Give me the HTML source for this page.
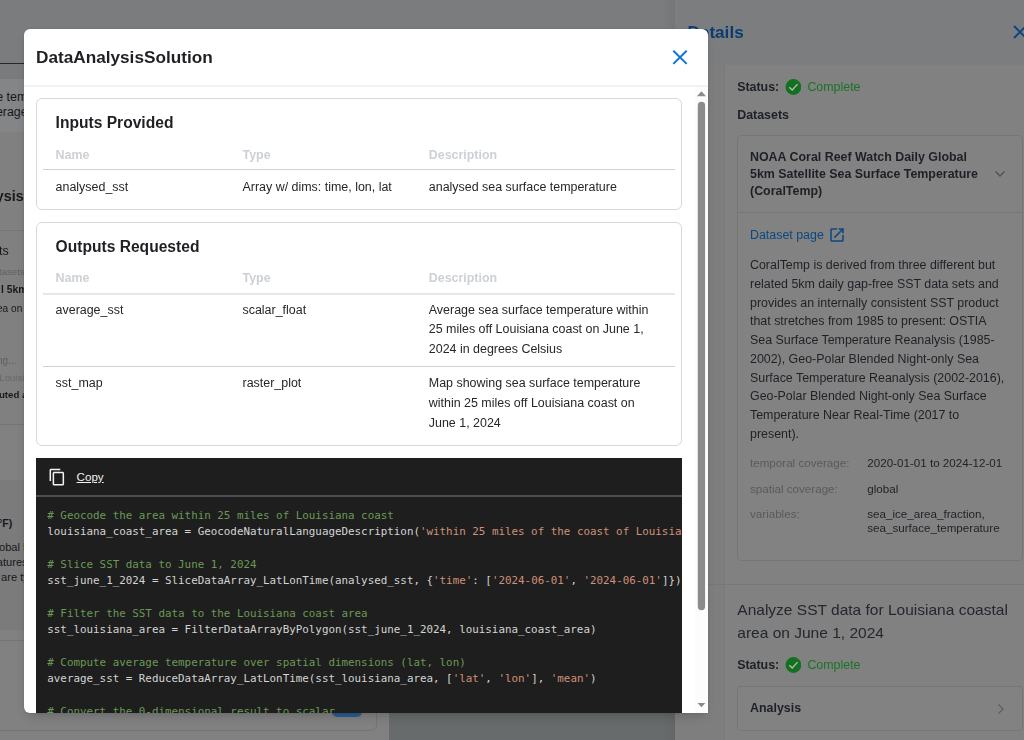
<!DOCTYPE html>
<html lang="en">
<head>
<meta charset="utf-8">
<title>DataAnalysisSolution</title>
<style>
*{box-sizing:border-box;margin:0;padding:0}
html,body{width:1024px;height:740px;overflow:hidden}
body{font-family:"Liberation Sans",Arial,sans-serif;font-size:12.42px;color:#1c1e21;background:#7b7c7e;position:relative}
.abs{position:absolute}
.t{position:absolute;white-space:pre;line-height:1}
.g{will-change:transform}

/* ---------- dimmed background page ---------- */
#bg{position:absolute;left:0;top:0;width:1024px;height:740px;overflow:hidden}
#bg .t{color:#17181b}
#dp .t{color:#1d2026}

/* ---------- modal ---------- */
#modal{will-change:transform;position:absolute;left:24px;top:29px;width:684px;height:684.3px;background:#fff;border-radius:6px 6px 0 6px;overflow:hidden;
  box-shadow:0 6px 12px -4px rgba(0,0,0,.2),0 0 3px rgba(0,0,0,.1)}
#mhead{position:absolute;left:0;top:0;width:684px;height:58px;border-bottom:2px solid #f1f2f4}
#mtitle{left:12px;top:19.9px;font-size:17.2px;font-weight:bold;color:#1e2023}
#mbody{position:absolute;left:0;top:58px;width:684px;height:627px;overflow:hidden}
.card{position:absolute;left:12px;width:646px;border:1px solid #d5d8dc;border-radius:6px;background:#fff}
.card h3{position:absolute;left:18.6px;font-size:15.6px;font-weight:bold;color:#1e2023;line-height:1;white-space:pre}
.th{color:#cdd1d6;font-weight:bold;font-size:12.42px}
.td{color:#25272a;font-size:12.45px}
.hl{position:absolute;left:6px;width:632px;height:1px;background:#cfd3d7}
#code{position:absolute;left:36px;top:458px;width:646px;height:255.3px;background:#1e1e1e;overflow:hidden}
#code pre{position:absolute;left:11.3px;top:49.8px;font-family:"DejaVu Sans Mono","Liberation Mono",monospace;font-size:10.87px;line-height:16.33px;color:#d4d4d4;white-space:pre}
.c{color:#6a9955}.s{color:#ce9178}.p{color:#9cdcfe}
</style>
</head>
<body>
<div id="bg">
  <!-- top nav -->
  <div class="abs" style="left:0;top:0;width:676px;height:64px;background:#7b7c7e"></div>
  <div class="abs" style="left:0;top:63px;width:60px;height:1px;background:#262728"></div>
  <!-- left panel -->
  <div class="abs" style="left:0;top:64px;width:388.5px;height:676px;background:#7a7b7d"></div>
  <div class="abs" style="left:0;top:79px;width:376px;height:52.6px;background:#848587"></div>
  <div class="t" style="left:-3.8px;top:91.1px;font-size:12.42px">e temperature</div>
  <div class="t" style="left:-4.1px;top:106.1px;font-size:12.42px">erage of</div>
  <div class="abs" style="left:0;top:131.6px;width:388.5px;height:609px;background:#808080"></div>
  <div class="t g" style="left:-80px;top:188.8px;font-size:14.29px;font-weight:bold;width:103.6px;text-align:right">Data Analysis</div>
  <div class="abs" style="left:0;top:230px;width:388.5px;height:1px;background:#767676"></div>
  <div class="t g" style="left:-1px;top:244.7px;font-size:12.42px">ts</div>
  <div class="t g" style="left:-0.7px;top:267.3px;font-size:9.6px;color:#5f6164">tasets</div>
  <div class="t g" style="left:0.9px;top:284.6px;font-size:10.3px;font-weight:bold">l 5km</div>
  <div class="t g" style="left:-3.3px;top:303.6px;font-size:10.1px">ea on</div>
  <div class="t g" style="left:-2.9px;top:355.8px;font-size:10px;color:#5c5e61">ng...</div>
  <div class="t g" style="left:-6.2px;top:373.3px;font-size:9.6px;color:#66686b">_Louisiana</div>
  <div class="t g" style="left:-1.5px;top:390.2px;font-size:9.6px;font-weight:bold">uted av</div>
  <div class="abs" style="left:0;top:424px;width:388.5px;height:1px;background:#747474"></div>
  <div class="abs" style="left:0;top:425px;width:388.5px;height:55px;background:#818181"></div>
  <div class="abs" style="left:0;top:480px;width:388.5px;height:150px;background:#7b7b7b"></div>
  <div class="t" style="left:-2px;top:517.6px;font-size:10.6px;font-weight:bold">°F)</div>
  <div class="t" style="left:-1px;top:542px;font-size:11.1px">obal 5km</div>
  <div class="t" style="left:-3.2px;top:557.3px;font-size:11.1px">atures</div>
  <div class="t" style="left:1.1px;top:572.2px;font-size:11.1px">are typ</div>
  <div class="abs" style="left:0;top:630px;width:388.5px;height:110px;background:#818181"></div>
  <div class="abs" style="left:-10px;top:640px;width:386.5px;height:91px;border:1px solid #747474;border-radius:6px"></div>
  <div class="abs" style="left:331.8px;top:690px;width:30.4px;height:27.3px;border-radius:5px;background:#2a5d8f"></div>
  <!-- map -->
  <div class="abs" style="left:388.5px;top:64.5px;width:287px;height:676px;background:#676b6c"></div>
  <!-- details panel -->
  <div class="abs" style="left:663px;top:0;width:12.3px;height:740px;background:linear-gradient(to right,rgba(0,0,0,0),rgba(0,0,0,.05))"></div>
  <div id="dp" class="abs" style="will-change:transform;left:675.3px;top:0;width:349px;height:740px;background:#818181;overflow:hidden">
    <div class="abs" style="left:0;top:0;width:349px;height:65px;background:#7c7d7f"></div>
    <div class="abs" style="left:0;top:65px;width:48.7px;height:675px;background:#7e7e7e"></div>
    <div class="abs" style="left:48.7px;top:65px;width:1px;height:675px;background:#7a7a7a"></div>
    <div class="t" style="left:12.5px;top:24px;font-size:17.14px;font-weight:bold;color:#0a3c72">Details</div>
    <svg class="abs" style="left:337.7px;top:25.4px" width="14" height="14" viewBox="0 0 14 14"><path d="M1 1 L13 13 M13 1 L1 13" stroke="#0b4380" stroke-width="1.9" fill="none"/></svg>
    <div class="t" style="left:62.2px;top:81.1px;font-weight:bold">Status:</div>
    <svg class="abs" style="left:110.2px;top:79px" width="16" height="16" viewBox="0 0 16 16"><circle cx="8.4" cy="8" r="7.9" fill="#14701f"/><path d="M4.3 8.2 L7.2 11 L12.6 5.1" fill="none" stroke="#aebfaf" stroke-width="1.35"/></svg>
    <div class="t" style="left:132.4px;top:81.1px;color:#1a7228">Complete</div>
    <div class="t" style="left:62.2px;top:108.5px;font-weight:bold">Datasets</div>
    <div class="abs" style="left:61.5px;top:135.4px;width:286px;height:425.4px;border:1px solid #767676;border-radius:4px;background:#828282"></div>
    <div class="abs" style="left:61.5px;top:212px;width:286px;height:1px;background:#767676"></div>
    <div class="t" style="left:75px;top:148.7px;font-weight:bold;line-height:17.39px">NOAA Coral Reef Watch Daily Global
5km Satellite Sea Surface Temperature
(CoralTemp)</div>
    <svg class="abs" style="left:319px;top:170px" width="12" height="8" viewBox="0 0 12 8"><path d="M1.5 1.5 L6 6 L10.5 1.5" fill="none" stroke="#4f5153" stroke-width="1.4"/></svg>
    <div class="t" style="left:75px;top:229.3px;color:#0b4880">Dataset page</div>
    <svg class="abs" style="left:152.9px;top:225.8px" width="18" height="18" viewBox="0 0 24 24"><path d="M19 19H5V5h7V3H5c-1.11 0-2 .9-2 2v14c0 1.1.89 2 2 2h14c1.1 0 2-.9 2-2v-7h-2v7zM14 3v2h3.59l-9.83 9.83 1.41 1.41L19 6.41V10h2V3h-7z" fill="#0b4880"/></svg>
    <div class="t" style="left:75px;top:259.30px;font-size:12.42px;color:#1e2126">CoralTemp is derived from three different but</div>
    <div class="t" style="left:75px;top:278.02px;font-size:12.42px;color:#1e2126">related 5km daily gap-free SST data sets and</div>
    <div class="t" style="left:75px;top:296.74px;font-size:12.42px;color:#1e2126">provides an internally consistent SST product</div>
    <div class="t" style="left:75px;top:315.46px;font-size:12.42px;color:#1e2126">that stretches from 1985 to present: OSTIA</div>
    <div class="t" style="left:75px;top:334.18px;font-size:12.42px;color:#1e2126">Sea Surface Temperature Reanalysis (1985-</div>
    <div class="t" style="left:75px;top:352.90px;font-size:12.42px;color:#1e2126">2002), Geo-Polar Blended Night-only Sea</div>
    <div class="t" style="left:75px;top:371.62px;font-size:12.42px;color:#1e2126">Surface Temperature Reanalysis (2002-2016),</div>
    <div class="t" style="left:75px;top:390.34px;font-size:12.42px;color:#1e2126">Geo-Polar Blended Night-only Sea Surface</div>
    <div class="t" style="left:75px;top:409.06px;font-size:12.42px;color:#1e2126">Temperature Near Real-Time (2017 to</div>
    <div class="t" style="left:75px;top:427.78px;font-size:12.42px;color:#1e2126">present).</div>
    <div class="t" style="left:75px;top:457px;font-size:11.62px;color:#585a5e">temporal coverage:</div>
    <div class="t" style="left:192.3px;top:457px;font-size:11.62px;color:#1e2126">2020-01-01 to 2024-12-01</div>
    <div class="t" style="left:75px;top:482.8px;font-size:11.62px;color:#585a5e">spatial coverage:</div>
    <div class="t" style="left:192.3px;top:482.8px;font-size:11.62px;color:#1e2126">global</div>
    <div class="t" style="left:75px;top:508.1px;font-size:11.62px;color:#585a5e">variables:</div>
    <div class="t" style="left:192.3px;top:507px;font-size:11.62px;color:#1e2126;line-height:14px">sea_ice_area_fraction,
sea_surface_temperature</div>
    <div class="abs" style="left:0;top:584px;width:349px;height:1px;background:#777"></div>
    <div class="t" style="left:62.3px;top:597.9px;font-size:15.52px;line-height:23.5px;color:#23272e">Analyze SST data for Louisiana coastal
area on June 1, 2024</div>
    <div class="t" style="left:62.2px;top:659px;font-weight:bold">Status:</div>
    <svg class="abs" style="left:110.2px;top:656.9px" width="16" height="16" viewBox="0 0 16 16"><circle cx="8.4" cy="8" r="7.9" fill="#14701f"/><path d="M4.3 8.2 L7.2 11 L12.6 5.1" fill="none" stroke="#aebfaf" stroke-width="1.35"/></svg>
    <div class="t" style="left:132.4px;top:659px;color:#1a7228">Complete</div>
    <div class="abs" style="left:61.5px;top:685.6px;width:286px;height:45.4px;border:1px solid #767676;border-radius:4px;background:#828282"></div>
    <div class="t" style="left:75px;top:702px;font-weight:bold">Analysis</div>
    <svg class="abs" style="left:321.5px;top:702.5px" width="8" height="12" viewBox="0 0 8 12"><path d="M1.5 1.5 L6 6 L1.5 10.5" fill="none" stroke="#5c5e60" stroke-width="1.3"/></svg>
  </div>
</div>
<div id="modal">
  <div id="mhead">
    <div class="t" id="mtitle">DataAnalysisSolution</div>
    <svg class="abs" style="left:648px;top:20px" width="16" height="16" viewBox="0 0 16 16"><path d="M1.3 1.7 L14.7 14.9 M14.7 1.7 L1.3 14.9" stroke="#0f75dc" stroke-width="2" fill="none"/></svg>
  </div>
  <div id="mbody">
    <div class="card" style="top:11px;height:112px">
      <h3 style="top:16px">Inputs Provided</h3>
      <div class="t th" style="left:18.6px;top:50px">Name</div>
      <div class="t th" style="left:205.5px;top:50px">Type</div>
      <div class="t th" style="left:391.8px;top:50px">Description</div>
      <div class="hl" style="top:70px"></div>
      <div class="t td" style="left:18.6px;top:82.1px">analysed_sst</div>
      <div class="t td" style="left:205.5px;top:82.1px">Array w/ dims: time, lon, lat</div>
      <div class="t td" style="left:391.8px;top:82.1px">analysed sea surface temperature</div>
    </div>
    <div class="card" style="top:135px;height:223.5px">
      <h3 style="top:15.5px">Outputs Requested</h3>
      <div class="t th" style="left:18.6px;top:49.4px">Name</div>
      <div class="t th" style="left:205.5px;top:49.4px">Type</div>
      <div class="t th" style="left:391.8px;top:49.4px">Description</div>
      <div class="hl" style="top:70px;height:2px;opacity:.55"></div>
      <div class="t td" style="left:18.6px;top:81.4px">average_sst</div>
      <div class="t td" style="left:205.5px;top:81.4px">scalar_float</div>
      <div class="t td" style="left:391.8px;top:81.4px">Average sea surface temperature within</div>
      <div class="t td" style="left:391.8px;top:100.3px">25 miles off Louisiana coast on June 1,</div>
      <div class="t td" style="left:391.8px;top:120.1px">2024 in degrees Celsius</div>
      <div class="hl" style="top:143px"></div>
      <div class="t td" style="left:18.6px;top:153.9px">sst_map</div>
      <div class="t td" style="left:205.5px;top:153.9px">raster_plot</div>
      <div class="t td" style="left:391.8px;top:153.9px">Map showing sea surface temperature</div>
      <div class="t td" style="left:391.8px;top:174px">within 25 miles off Louisiana coast on</div>
      <div class="t td" style="left:391.8px;top:194.1px">June 1, 2024</div>
    </div>
    <!-- scrollbar -->
    <div class="abs" style="left:671px;top:0;width:13px;height:627px;background:#fcfcfc"></div>
    <svg class="abs" style="left:669px;top:0" width="15" height="627" viewBox="0 0 15 627">
      <path d="M3.9 9.2 L8.45 4.2 L13 9.2Z" fill="#8b8b8b"/>
      <rect x="4.8" y="14.8" width="7.3" height="508.4" rx="3.65" fill="#8b8b8b"/>
      <path d="M4.5 616 L8.45 620.3 L12.4 616Z" fill="#8b8b8b"/>
    </svg>
  </div>
</div>
<div id="code">
  <div class="abs" style="left:0;top:37px;width:646px;height:2px;background:#4e4e4e"></div>
  <svg class="abs" style="left:12px;top:10.3px" width="18.4" height="18.4" viewBox="0 0 24 24"><path d="M16 1H4c-1.1 0-2 .9-2 2v14h2V3h12V1zm3 4H8c-1.1 0-2 .9-2 2v14c0 1.1.9 2 2 2h11c1.1 0 2-.9 2-2V7c0-1.1-.9-2-2-2zm0 16H8V7h11v14z" fill="#f2f2f2"/></svg>
  <div class="t" style="left:40.6px;top:13.2px;font-size:11.6px;color:#f2f2f2;text-decoration:underline">Copy</div>
<pre><span class="c"># Geocode the area within 25 miles of Louisiana coast</span>
louisiana_coast_area = GeocodeNaturalLanguageDescription(<span class="s">'within 25 miles of the coast of Louisiana'</span>)

<span class="c"># Slice SST data to June 1, 2024</span>
sst_june_1_2024 = SliceDataArray_LatLonTime(analysed_sst, {<span class="s">'time'</span>: [<span class="s">'2024-06-01'</span>, <span class="s">'2024-06-01'</span>]})

<span class="c"># Filter the SST data to the Louisiana coast area</span>
sst_louisiana_area = FilterDataArrayByPolygon(sst_june_1_2024, louisiana_coast_area)

<span class="c"># Compute average temperature over spatial dimensions (lat, lon)</span>
average_sst = ReduceDataArray_LatLonTime(sst_louisiana_area, [<span class="s">'lat'</span>, <span class="s">'lon'</span>], <span class="s">'mean'</span>)

<span class="c"># Convert the 0-dimensional result to scalar</span>
average_sst = ConvertToScalar(average_sst)</pre>
</div>
</body>
</html>
